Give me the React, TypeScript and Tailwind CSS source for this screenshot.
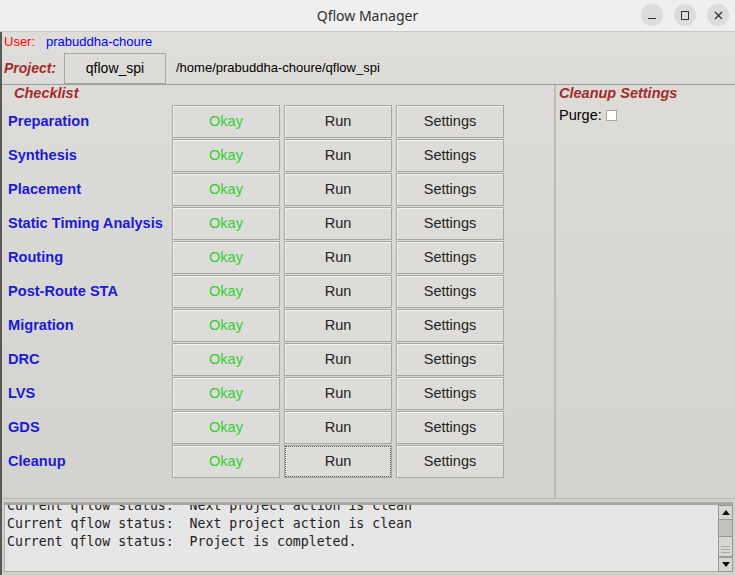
import React from "react";

const steps = [
  "Preparation",
  "Synthesis",
  "Placement",
  "Static Timing Analysis",
  "Routing",
  "Post-Route STA",
  "Migration",
  "DRC",
  "LVS",
  "GDS",
  "Cleanup",
];

const btn =
  "h-[33px] w-[108px] flex items-center justify-center border border-[#a9a7a3] bg-[#dedcd8] shadow-[inset_1px_1px_0_#f2f1ef] text-[14.5px]";

export default function App() {
  return (
    <div className="w-[735px] h-[575px] flex flex-col bg-[#d9d7d3] overflow-hidden" style={{ fontFamily: '"Liberation Sans", Arial, sans-serif' }}>
      {/* title bar */}
      <div className="h-[32px] shrink-0 flex items-center relative bg-[#efefef] border-b border-[#c8c8c8]">
        <div className="flex-1 text-center text-[14px] text-[#2e2e2e]" style={{ fontFamily: '"Noto Sans", sans-serif' }}>
          Qflow Manager
        </div>
        <div className="absolute right-[6px] top-[4px] flex gap-[11px]">
          <div className="w-[22px] h-[22px] rounded-full bg-[#dcdcdc] flex items-end justify-center pb-[7px]">
            <div className="w-[8px] h-[1.5px] bg-[#333]" />
          </div>
          <div className="w-[22px] h-[22px] rounded-full bg-[#dcdcdc] flex items-center justify-center">
            <div className="w-[8px] h-[9px] border-[1.5px] border-[#333]" />
          </div>
          <div className="w-[22px] h-[22px] rounded-full bg-[#dcdcdc] flex items-center justify-center">
            <svg width="9" height="9" viewBox="0 0 9 9">
              <path d="M1 1L8 8M8 1L1 8" stroke="#333" strokeWidth="1.3" />
            </svg>
          </div>
        </div>
      </div>

      <div className="flex-1 flex flex-col bg-gradient-to-b from-[#dfddd9] to-[#d2d0cc] border-l-2 border-[#5a5855]">
        {/* user */}
        <div className="h-[20px] flex items-center text-[13px] pl-[2px]">
          <span className="text-[#ff0000]">User:</span>
          <span className="text-[#0000ff] ml-[11px]">prabuddha-choure</span>
        </div>
        {/* project */}
        <div className="h-[32px] flex items-center pl-[2px]">
          <span className="text-[14px] font-bold italic text-[#a52a2a] w-[60px]">Project:</span>
          <div className="h-[31px] w-[102px] flex items-center justify-center border border-[#a9a7a3] bg-[#dedcd8] text-[14px] text-black">
            qflow_spi
          </div>
          <span className="ml-[10px] text-[13px] text-black">/home/prabuddha-choure/qflow_spi</span>
        </div>

        <div className="flex border-t border-[#9e9c98] h-[414px]">
          {/* checklist */}
          <div className="w-[554px] pl-[6px] border-r-2 border-[#bdbbb7]">
            <div className="h-[17px] pl-[6px] text-[14.5px] font-bold italic text-[#a52a2a] flex items-center">Checklist</div>
            <div className="flex flex-col gap-[1px] mt-[3px]">
              {steps.map((s) => (
                <div key={s} className="flex items-center">
                  <div className="w-[164px] text-[14.6px] font-bold text-[#1a1ad8]">{s}</div>
                  <div className="flex gap-[4px]">
                    <div className={`${btn} text-[#2fd02f]`}>Okay</div>
                    <div className={`${btn} text-[#222] ${s === "Cleanup" ? "outline outline-1 outline-dotted outline-[#555] -outline-offset-2" : ""}`}>
                      Run
                    </div>
                    <div className={`${btn} text-[#222]`}>Settings</div>
                  </div>
                </div>
              ))}
            </div>
          </div>
          {/* cleanup settings */}
          <div className="flex-1 pl-[3px]">
            <div className="h-[17px] text-[14.5px] font-bold italic text-[#a52a2a] flex items-center">Cleanup Settings</div>
            <div className="flex items-center text-[14.5px] text-black mt-[3px]">
              Purge:
              <div className="ml-[4px] w-[11px] h-[11px] bg-white border border-[#a9a7a3]" />
            </div>
          </div>
        </div>

        {/* console */}
        <div className="h-[4px] border-t border-[#b8b6b2]" />
        <div className="mx-[2px] mb-[3px] flex flex-1 border-t-[3px] border-[#a8a6a2]">
          <div className="flex-1 bg-[#e6e6e6] border-l border-b border-[#b0aeaa] pl-[2px] overflow-hidden text-[13.2px] leading-[18px] text-[#222]" style={{ fontFamily: '"DejaVu Sans Mono", monospace' }}>
            <div className="-mt-[8px] whitespace-pre">Current qflow status:  Next project action is clean</div>
            <div className="whitespace-pre">Current qflow status:  Next project action is clean</div>
            <div className="whitespace-pre">Current qflow status:  Project is completed.</div>
          </div>
          <div className="w-[15px] flex flex-col bg-[#c3c1bd] border border-[#9a9894]">
            <div className="h-[14px] bg-[#d9d7d3] flex items-center justify-center border-b border-[#9a9894]">
              <svg width="8" height="5" viewBox="0 0 8 5"><path d="M0 5L4 0L8 5Z" fill="#111" /></svg>
            </div>
            <div className="flex-1 flex flex-col">
              <div className="h-[16px]" />
              <div className="flex-1 bg-[#d9d7d3] border-y border-[#9a9894] flex flex-col justify-end pb-[3px] gap-[2px] px-[2px]">
                <div className="h-px bg-[#aaa]" />
                <div className="h-px bg-[#aaa]" />
                <div className="h-px bg-[#aaa]" />
              </div>
            </div>
            <div className="h-[14px] bg-[#d9d7d3] flex items-center justify-center border-t border-[#9a9894]">
              <svg width="8" height="5" viewBox="0 0 8 5"><path d="M0 0L8 0L4 5Z" fill="#111" /></svg>
            </div>
          </div>
        </div>
      </div>
    </div>
  );
}
